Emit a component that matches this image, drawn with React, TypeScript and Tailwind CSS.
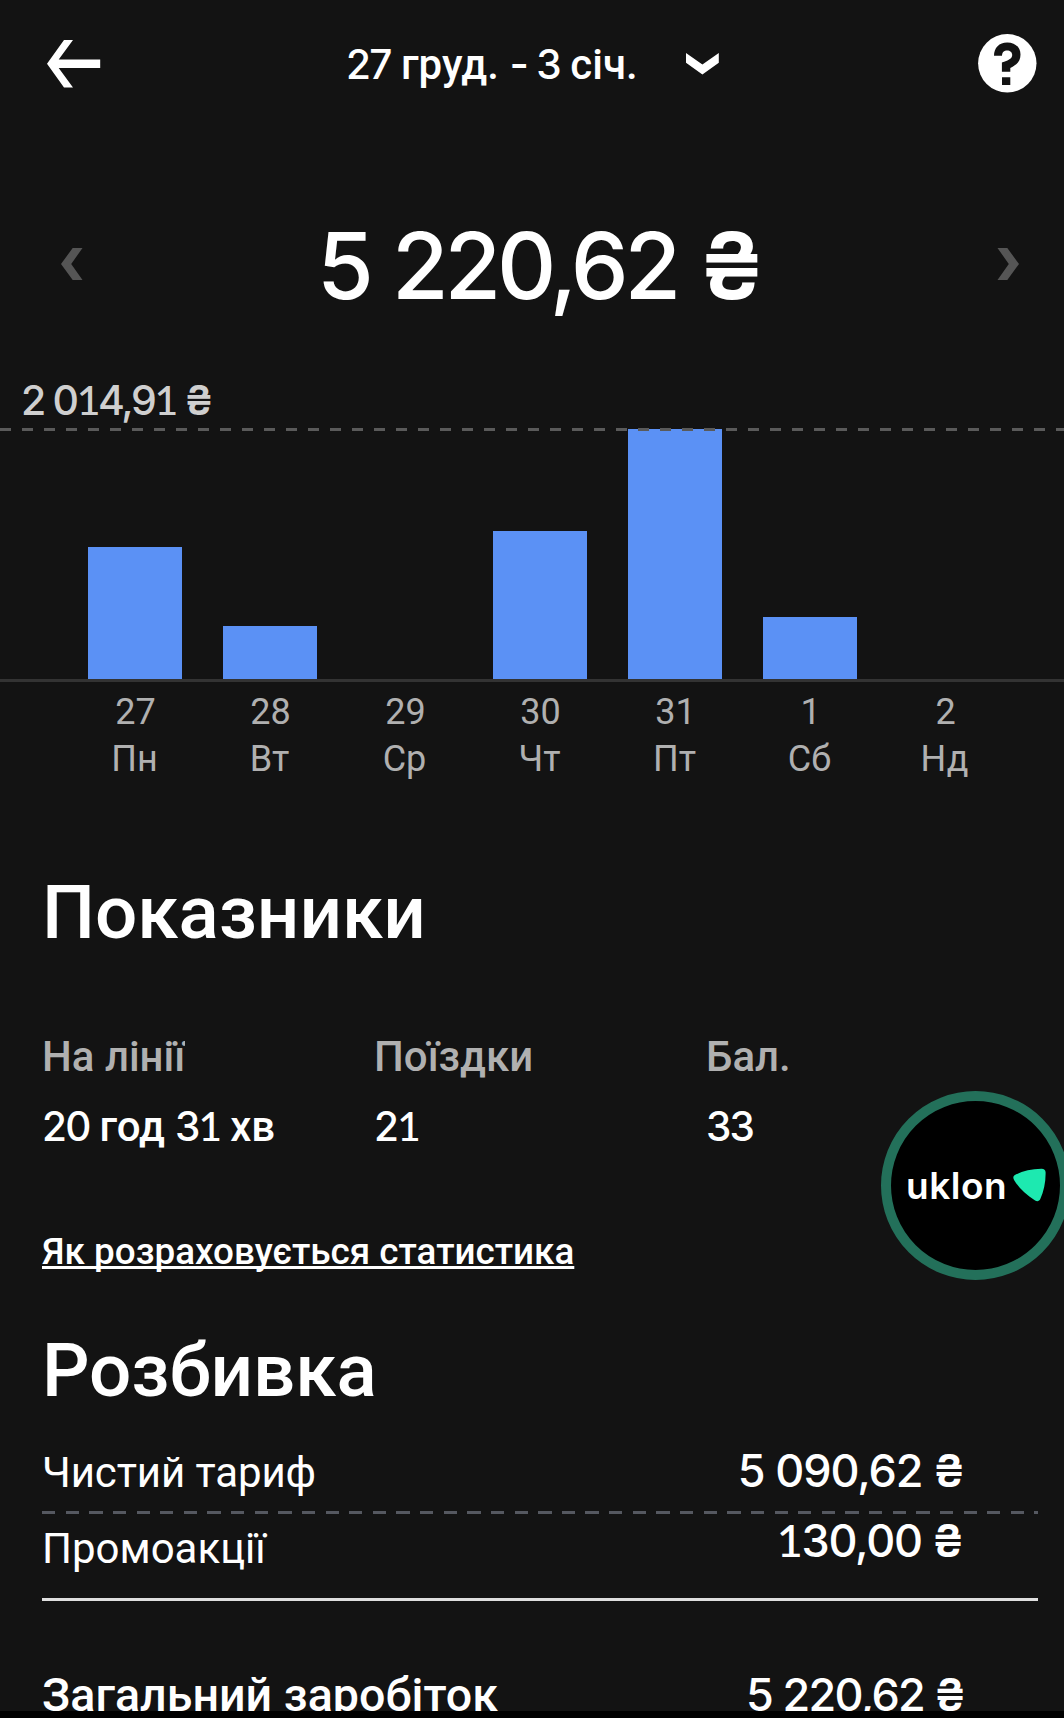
import type { ReactNode } from 'react';

const days = [
  { date: '27', name: 'Пн', height: 132 },
  { date: '28', name: 'Вт', height: 53.5 },
  { date: '29', name: 'Ср', height: 0 },
  { date: '30', name: 'Чт', height: 148 },
  { date: '31', name: 'Пт', height: 250 },
  { date: '1', name: 'Сб', height: 62 },
  { date: '2', name: 'Нд', height: 0 },
];

function One() {
  return <span className="font-['Lato'] leading-[0] font-medium">1</span>;
}

function Hryvnia() {
  return <span className="leading-[0] font-semibold tracking-normal">₴</span>;
}

function Digits({ children }: { children: ReactNode }) {
  return <span className="font-['Inter'] text-[40.5px] leading-[0] tracking-[-1.8px] font-[450]">{children}</span>;
}

function Metric({ label, children }: { label: string; children: ReactNode }) {
  return (
    <div className="flex flex-col items-start">
      <div className="h-[56px] overflow-hidden leading-[56px] text-[#b0b0b0]">{label}</div>
      <div className="mt-[14px] h-[56px] leading-[56px] whitespace-nowrap [word-spacing:-0.5px]">{children}</div>
    </div>
  );
}

export default function App() {
  return (
    <div className="relative flex h-[1718px] w-[1064px] flex-col overflow-hidden bg-[#131313] font-['Roboto',sans-serif] font-medium text-white">
      <header className="flex h-[127px] shrink-0 items-center pr-[27px] pl-[47px]">
        <svg className="h-[48px] w-[54px]" viewBox="0 0 54 48" fill="currentColor">
          <path d="M17 0h9L11.7 19.5H53.2v8.6H11.7L26 47.6h-9L0 23.8z" />
        </svg>
        <div className="ml-[245px] flex w-[373px] items-center justify-between">
          <h2 className="pt-[2px] text-[42px] leading-[42px] whitespace-nowrap">
            <Digits>27</Digits> груд. <span className="font-['Inter'] leading-[0] tracking-[-3px]">-</span>{' '}
            <Digits>3</Digits> січ.
          </h2>
          <svg className="h-[22px] w-[33px]" viewBox="0 0 33 22" fill="currentColor">
            <path d="M0 0l16.4 11.6L32.8 0v9.8L16.4 21.6 0 9.8z" />
          </svg>
        </div>
        <svg className="ml-auto h-[59px] w-[59px]" viewBox="0 0 59 59">
          <circle cx="29.3" cy="29.3" r="29.2" fill="#fff" />
          <path
            d="M16 21.8C16 13.7 21.2 8.4 29.2 8.4c8 0 13.3 5 13.3 12 0 6.400-3.600 10.600-10.200 13.500v3.800h-8.400v-9.200c6.400-1.900 10.300-4 10.300-7.500 0-2.900-2.200-4.600-5-4.600-3.100 0-5.200 1.800-5.200 5.400zM24 43.200h8.300v7.800H24z"
            fill="#131313"
          />
        </svg>
      </header>

      <section className="flex h-[253px] shrink-0 items-center justify-between pt-[20px] pr-[45px] pl-[61px]">
        <svg className="h-[32px] w-[22px]" viewBox="0 0 22 32" fill="#555">
          <path d="M11.700 0H21.500L10.200 16l11.300 16H11.700L0 16z" />
        </svg>
        <h1 className="pt-[5px] pl-[1px] font-['Inter'] text-[92px] leading-[94px] tracking-[-4.200px] whitespace-nowrap [word-spacing:2px]">
          5 220,62 <Hryvnia />
        </h1>
        <svg className="h-[32px] w-[22px]" viewBox="0 0 22 32" fill="#555">
          <path d="M10.300 0H.5l11.300 16L.5 32h9.800L22 16z" />
        </svg>
      </section>

      <section className="shrink-0">
        <div className="h-[42px] pl-[21px] font-['Inter'] text-[41px] leading-[40px] tracking-[-2.350px] whitespace-nowrap text-[#cfcfcf]">
          2 0<One />4,9<One /> <Hryvnia />
        </div>
        <div className="relative mt-[7px] flex h-[253px] items-end border-b-3 border-[#333] pl-[67.5px]">
          {days.map((day) => (
            <div key={day.date} className="flex w-[135px] justify-center">
              <div className="w-[94px] bg-[#5b91f5]" style={{ height: day.height }} />
            </div>
          ))}
          <div className="absolute inset-x-0 -top-[1.500px] h-[3px] bg-[repeating-linear-gradient(90deg,#5a5a5a_0_11px,transparent_11px_22px)]" />
        </div>
        <div className="flex pt-[7px] pl-[67.5px] text-[36px] leading-[47px] font-normal text-[#b0b0b0]">
          {days.map((day) => (
            <div key={day.date} className="flex w-[135px] flex-col items-center">
              <span className="pl-px">{day.date}</span>
              <span className="pr-px">{day.name}</span>
            </div>
          ))}
        </div>
      </section>

      <section className="mt-[85px] shrink-0 pr-[26px] pl-[42px]">
        <h2 className="text-[74.600px] leading-[90px]">Показники</h2>
        <div className="mt-[71px] grid grid-cols-3 text-[42px]">
          <Metric label="На лінії">
            <Digits>20</Digits> год{' '}
            <Digits>
              3<One />
            </Digits>{' '}
            хв
          </Metric>
          <Metric label="Поїздки">
            <Digits>
              2<One />
            </Digits>
          </Metric>
          <Metric label="Бал.">
            <Digits>33</Digits>
          </Metric>
        </div>
        <a
          href="#stats"
          className="mt-[72px] block text-[36.850px] leading-[50px] underline decoration-[3px] underline-offset-[2px] [text-decoration-skip-ink:none]"
        >
          Як розраховується статистика
        </a>
      </section>

      <section className="mt-[49px] flex shrink-0 flex-col pr-[26px] pl-[42px]">
        <h2 className="text-[74.600px] leading-[90px] tracking-[-0.100px]">Розбивка</h2>
        <div className="mt-[10px] flex h-[85px] items-start justify-between pt-[20px] pr-[73px]">
          <span className="mt-[2px] text-[42px] leading-[50px] font-normal tracking-[-0.100px]">Чистий тариф</span>
          <span className="font-['Inter'] text-[45px] leading-[50px] tracking-[-1.100px]">
            5 090,62 <Hryvnia />
          </span>
        </div>
        <div className="h-[3px] bg-[repeating-linear-gradient(90deg,#555860_0_13.300px,transparent_13.300px_23.630px)]" />
        <div className="flex h-[84px] items-start justify-between pr-[74px]">
          <span className="mt-[10px] text-[42px] leading-[50px] font-normal">Промоакції</span>
          <span className="mt-[2px] font-['Inter'] text-[45px] leading-[50px] tracking-[-1.300px]">
            <One />
            30,00 <Hryvnia />
          </span>
        </div>
        <div className="h-[3px] bg-[#dfdfdf]" />
        <div className="mt-[69px] flex h-[41px] items-start justify-between overflow-hidden pr-[72px]">
          <span className="text-[46.600px] leading-[50px]">Загальний заробіток</span>
          <span className="font-['Inter'] text-[45px] leading-[50px] tracking-[-1.700px]">
            5 220,62 <Hryvnia />
          </span>
        </div>
      </section>
      <footer className="h-[7px] shrink-0 bg-black" />

      <div className="absolute top-[1091px] left-[881px] flex h-[189px] w-[189px] items-center rounded-full border-[10.500px] border-[#23705a] bg-black pl-[15px]">
        <span className="pb-[1px] font-['Inter'] text-[37px] leading-[37px] font-semibold tracking-[0.500px]">uklon</span>
        <svg className="absolute top-[67px] left-[122px] h-[34px] w-[33px]" viewBox="0 0 33 34" fill="#1de9b0">
          <path d="M1.500 7.300C9 3 18 1 28.500.700c2.700 0 4 1.300 4.100 3.600.2 9.700-1.800 18.700-5.300 26.700-1.100 2.300-3.100 2.700-5.200 1.400C13 26.800 5.600 19.800 1.200 12.200.1 10.200-.2 8.500 1.500 7.300z" />
        </svg>
      </div>
    </div>
  );
}
